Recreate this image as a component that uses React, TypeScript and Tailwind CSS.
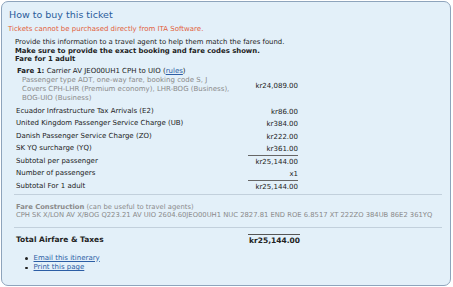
import React from "react";

const font = { fontFamily: '"DejaVu Sans", Verdana, sans-serif' };

function Row({ label, amount, line }: { label: React.ReactNode; amount: string; line?: boolean }) {
  return (
    <div className="flex h-[12.5px] items-stretch">
      <div className="flex-1 leading-[12.5px] text-[#222]">{label}</div>
      <div
        className={
          "w-[50px] text-right leading-[12px] text-[#222] " +
          (line ? "border-t border-[#666]" : "border-t border-transparent")
        }
      >
        {amount}
      </div>
    </div>
  );
}

export default function App() {
  return (
    <div className="p-px" style={font}>
      <div className="h-[285px] w-[450px] rounded-[7px] border border-[#8ea4bc] bg-[#e3f0f9] pr-[6px]">
        <div className="ml-[7px] mt-[7px] text-[9.5px] leading-[12px] text-[#2b5c9b]">How to buy this ticket</div>
        <div className="ml-[6px] mt-[3px] text-[7px] leading-[10px] text-[#e2603a]">
          Tickets cannot be purchased directly from ITA Software.
        </div>
        <div className="ml-[13px] mt-[4px] text-[6.9px] leading-[8.5px] text-[#222]">
          <div>Provide this information to a travel agent to help them match the fares found.</div>
          <div className="font-bold">Make sure to provide the exact booking and fare codes shown.</div>
          <div className="font-bold">Fare for 1 adult</div>
        </div>
        <div className="ml-[14px] mt-[3px] w-[282px] text-[7px]">
          <div className="flex items-center">
            <div className="flex-1 leading-[9px]">
              <div className="ml-[1px] text-[#222]">
                <span className="font-bold">Fare 1:</span> Carrier AV JEO00UH1 CPH to UIO (
                <span className="text-[#2c5ea5] underline">rules</span>)
              </div>
              <div className="ml-[6px] text-[#8a8a8a]">
                Passenger type ADT, one-way fare, booking code S, J
                <br />
                Covers CPH-LHR (Premium economy), LHR-BOG (Business),
                <br />
                BOG-UIO (Business)
              </div>
            </div>
            <div className="mt-[4px] w-[50px] text-right text-[#222]">kr24,089.00</div>
          </div>
          <div className="mt-[2px]">
            <Row label="Ecuador Infrastructure Tax Arrivals (E2)" amount="kr86.00" />
            <Row label="United Kingdom Passenger Service Charge (UB)" amount="kr384.00" />
            <Row label="Danish Passenger Service Charge (ZO)" amount="kr222.00" />
            <Row label="SK YQ surcharge (YQ)" amount="kr361.00" />
            <Row label="Subtotal per passenger" amount="kr25,144.00" line />
            <Row label="Number of passengers" amount="x1" />
            <Row label="Subtotal For 1 adult" amount="kr25,144.00" line />
          </div>
        </div>
        <div className="ml-[12px] mr-[2px] mt-[2px] border-t border-[#c2d0dc]" />
        <div className="ml-[14px] mt-[8px] text-[6.8px] leading-[8px] text-[#8a8a8a]">
          <div>
            <span className="font-bold">Fare Construction</span> (can be useful to travel agents)
          </div>
          <div className="whitespace-nowrap">
            CPH SK X/LON AV X/BOG Q223.21 AV UIO 2604.60JEO00UH1 NUC 2827.81 END ROE 6.8517 XT 222ZO 384UB 86E2 361YQ
          </div>
        </div>
        <div className="ml-[12px] mr-[2px] mt-[7.5px] border-t border-[#c2d0dc]" />
        <div className="ml-[14px] mt-[6px] flex w-[284px] text-[7.5px] font-bold text-[#222]">
          <div className="flex-1 pt-[1px] leading-[10px]">Total Airfare &amp; Taxes</div>
          <div className="w-[52px] border-t border-[#555] pt-[1px] text-right leading-[10px]">kr25,144.00</div>
        </div>
        <ul className="ml-[23px] mt-[8px] text-[7px] leading-[9.5px]">
          <li className="flex items-center">
            <span className="mr-[6px] inline-block h-[2.5px] w-[2.5px] rounded-full bg-[#222]" />
            <span className="text-[#2c5ea5] underline">Email this itinerary</span>
          </li>
          <li className="flex items-center">
            <span className="mr-[6px] inline-block h-[2.5px] w-[2.5px] rounded-full bg-[#222]" />
            <span className="text-[#2c5ea5] underline">Print this page</span>
          </li>
        </ul>
      </div>
    </div>
  );
}
